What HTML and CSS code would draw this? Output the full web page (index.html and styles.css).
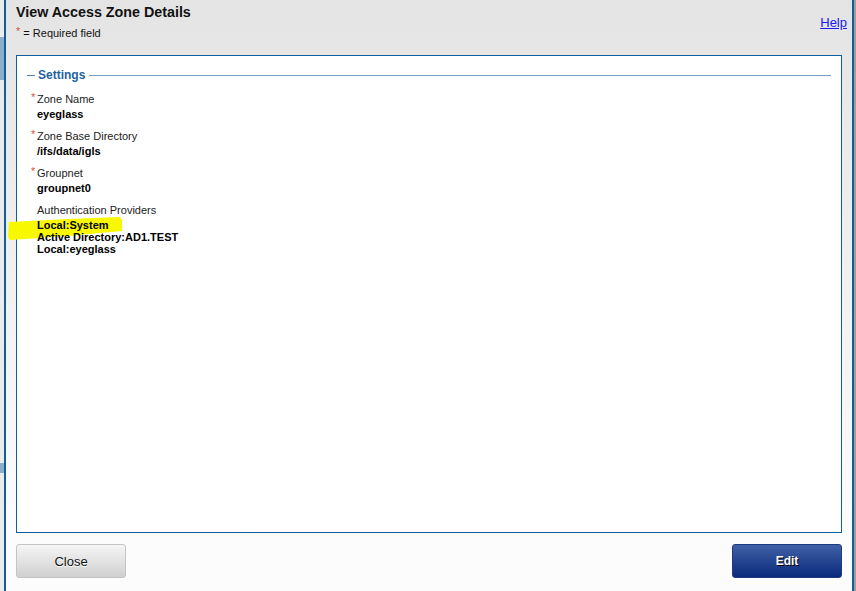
FILE: index.html
```html
<!DOCTYPE html>
<html lang="en">
<head>
  <meta charset="UTF-8">
  <meta name="viewport" content="width=device-width, initial-scale=1.0">
  <link rel="stylesheet" href="styles.css">
</head>
<body>
  <div class="dialog">
    <div class="dialog-head">
      <div>
        <h1 class="dialog-title">View Access Zone Details</h1>
        <div class="required-note"><span class="req">*</span> = Required field</div>
      </div>
      <a class="help-link" href="#">Help</a>
    </div>

    <div class="panel">
      <div class="legend">
        <span class="legend-dash"></span>
        <span class="legend-text">Settings</span>
        <span class="legend-line"></span>
      </div>

      <div class="fields">
        <div class="field">
          <span class="mark"><span class="req">*</span></span>
          <div>
            <div class="field-label">Zone Name</div>
            <div class="field-value">eyeglass</div>
          </div>
        </div>
        <div class="field">
          <span class="mark"><span class="req">*</span></span>
          <div>
            <div class="field-label">Zone Base Directory</div>
            <div class="field-value">/ifs/data/igls</div>
          </div>
        </div>
        <div class="field">
          <span class="mark"><span class="req">*</span></span>
          <div>
            <div class="field-label">Groupnet</div>
            <div class="field-value">groupnet0</div>
          </div>
        </div>
        <div class="field">
          <span class="mark"></span>
          <div>
            <div class="field-label">Authentication Providers</div>
            <div class="field-value">Local:System</div>
            <div class="field-value">Active Directory:AD1.TEST</div>
            <div class="field-value">Local:eyeglass</div>
          </div>
        </div>
      </div>
    </div>

    <div class="dialog-foot">
      <button class="btn btn-close">Close</button>
      <button class="btn btn-edit">Edit</button>
    </div>

    <!-- marker stroke drawn over the screenshot -->
    <div class="highlight"></div>
  </div>
</body>
</html>
```

FILE: styles.css
```css
body {
  margin: 0;
  height: 591px;
  overflow: hidden;
  font-family: "Liberation Sans", Arial, sans-serif;
  /* page behind the dialog */
  background:
    linear-gradient(#8eadcb, #8eadcb) 0 37px / 4px 43px no-repeat,
    linear-gradient(#8eadcb, #8eadcb) 0 463px / 4px 10px no-repeat,
    linear-gradient(#9f9f9f, #9f9f9f) right 0 top 0 / 2px 100% no-repeat,
    #ebebeb;
}

.dialog {
  position: relative;
  box-sizing: border-box;
  width: 850px;
  height: 600px;
  margin-left: 4px;
  padding: 0 10px;
  border-left: 2px solid #0f5f9e;
  border-right: 2px solid #0f5f9e;
  background: linear-gradient(#e4e4e4, #f0f0f0 45%, #fcfcfc 90%);
}

.dialog-head {
  display: flex;
  justify-content: space-between;
  align-items: flex-start;
  padding-top: 4px;
}

.dialog-title {
  margin: 0;
  font-size: 14.3px;
  line-height: 16px;
  font-weight: bold;
  color: #111;
}

.required-note {
  margin-top: 7px;
  font-size: 11px;
  line-height: 13px;
  color: #111;
}

.req {
  position: relative;
  top: -2px;
  color: #d2573a;
}

.help-link {
  margin-top: 11px;
  margin-right: -5px;
  font-size: 13px;
  line-height: 15px;
  color: #1a1aee;
}

.panel {
  box-sizing: border-box;
  height: 478px;
  margin-top: 15px;
  padding: 12px 10px 0 10px;
  border: 1px solid #0f5f9e;
  background: #fff;
}

.legend {
  display: flex;
  align-items: center;
  height: 14px;
}

.legend-dash {
  width: 8px;
  height: 1px;
  background: #4f80b0;
}

.legend-text {
  margin: 0 4px 0 3px;
  font-size: 12px;
  line-height: 14px;
  font-weight: bold;
  color: #1e62a0;
}

.legend-line {
  flex: 1;
  height: 1px;
  background: #7c9ebf;
}

.fields {
  position: relative;
  z-index: 2;
  margin-top: 10px;
  padding-left: 4px;
}

.field {
  display: flex;
  margin-bottom: 9px;
}

.mark {
  width: 6px;
  font-size: 11px;
  line-height: 14px;
}

.field-label {
  font-size: 11px;
  line-height: 14px;
  color: #222;
  margin-bottom: 2px;
}

.field-value {
  font-size: 11px;
  line-height: 12px;
  font-weight: bold;
  color: #000;
}

.dialog-foot {
  display: flex;
  justify-content: space-between;
  margin-top: 11px;
}

.btn {
  width: 110px;
  height: 34px;
  border-radius: 3px;
  font-family: "Liberation Sans", Arial, sans-serif;
  cursor: pointer;
}

.btn-close {
  border: 1px solid #c4c4c4;
  background: linear-gradient(#f6f6f6, #cfcfcf);
  font-size: 13px;
  color: #111;
  text-shadow: 0 1px 0 #fff;
}

.btn-edit {
  border: 1px solid #1b3a80;
  background: linear-gradient(#4060a6, #0a2a7c);
  font-size: 12px;
  font-weight: bold;
  color: #fff;
  text-shadow: 1px 1px 0 #000;
}

.highlight {
  position: absolute;
  z-index: 1;
  left: 2px;
  top: 217px;
  width: 114px;
  height: 24px;
  background: #f8f800;
  clip-path: polygon(1px 5px, 60px 2px, 112px 0, 114px 3px, 114px 14px, 60px 19px, 2px 23px, 0 20px);
}
```
